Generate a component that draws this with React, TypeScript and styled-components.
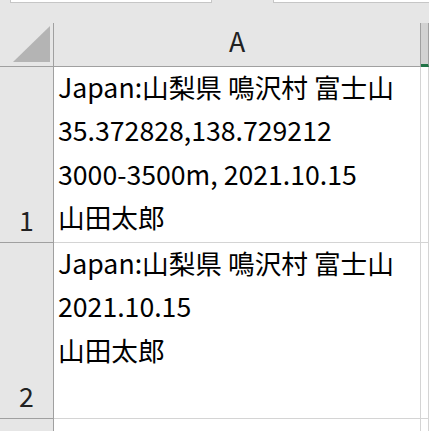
import React from 'react';
import styled, { createGlobalStyle } from 'styled-components';

const GlobalStyle = createGlobalStyle`
  html, body {
    margin: 0;
    padding: 0;
    overflow: hidden;
    background: #e6e6e6;
  }
  * {
    box-sizing: border-box;
  }
`;

const rows = [
  {
    n: 1,
    height: 176,
    lines: [
      'Japan:山梨県 鳴沢村 富士山',
      '35.372828,138.729212',
      '3000-3500m, 2021.10.15',
      '山田太郎',
    ],
  },
  {
    n: 2,
    height: 176,
    lines: ['Japan:山梨県 鳴沢村 富士山', '2021.10.15', '山田太郎'],
  },
  { n: 3, height: 44, lines: [] },
];

export default function App() {
  return (
    <Window>
      <GlobalStyle />
      <TopBar>
        <NameBox />
        <FormulaBox />
      </TopBar>
      <Sheet>
        <Corner>
          <svg width="37" height="36" viewBox="0 0 37 36">
            <polygon points="0,36 37,36 37,0" fill="#b4b4b4" />
          </svg>
        </Corner>
        <ColHeader>A</ColHeader>
        <ColHeader $selected />
        {rows.map((r) => (
          <React.Fragment key={r.n}>
            <RowHeader $h={r.height}>{r.n}</RowHeader>
            <Cell $h={r.height}>
              {r.lines.map((l, i) => (
                <Line key={i}>{l}</Line>
              ))}
            </Cell>
            <Cell $h={r.height} />
          </React.Fragment>
        ))}
      </Sheet>
    </Window>
  );
}

const Window = styled.div`
  width: 429px;
  height: 431px;
  overflow: hidden;
  font-family: 'Noto Sans CJK JP', 'Noto Sans', sans-serif;
  font-size: 26.67px;
  color: #000;
`;

const TopBar = styled.div`
  height: 23px;
  display: flex;
  align-items: flex-start;
`;

const NameBox = styled.div`
  margin-left: 10px;
  width: 202px;
  height: 3px;
  background: #fff;
  border: 1px solid #c6c6c6;
  border-top: none;
`;

const FormulaBox = styled.div`
  margin-left: 61px;
  flex: 1;
  height: 3px;
  background: #fff;
  border: 1px solid #c6c6c6;
  border-top: none;
  border-right: none;
`;

const Sheet = styled.div`
  display: grid;
  grid-template-columns: 54px 367px 1fr;
`;

const Corner = styled.div`
  height: 44px;
  border-right: 1px solid #a0a0a0;
  border-bottom: 1px solid #a0a0a0;
  display: flex;
  align-items: flex-end;
  justify-content: flex-end;
  padding: 0 3px 4px 0;
`;

const ColHeader = styled.div<{ $selected?: boolean }>`
  height: 44px;
  background: ${(p) => (p.$selected ? '#d2d2d2' : '#e6e6e6')};
  border-right: 1px solid #a0a0a0;
  border-bottom: ${(p) => (p.$selected ? '3px solid #217346' : '1px solid #a0a0a0')};
  text-align: center;
  line-height: 36px;
  color: #222;
`;

const RowHeader = styled.div<{ $h: number }>`
  height: ${(p) => p.$h}px;
  background: #e6e6e6;
  border-right: 1px solid #a0a0a0;
  border-bottom: 1px solid #a0a0a0;
  display: flex;
  align-items: flex-end;
  justify-content: center;
  padding-bottom: 1px;
  line-height: 43.3px;
  color: #222;
`;

const Cell = styled.div<{ $h: number }>`
  height: ${(p) => p.$h}px;
  background: #fff;
  border-right: 1px solid #d4d4d4;
  border-bottom: 1px solid #d4d4d4;
  padding: 0 0 0 4px;
  overflow: hidden;
  white-space: nowrap;
`;

const Line = styled.div`
  line-height: 43.3px;
  &:first-child {
    margin-top: -2px;
  }
`;
